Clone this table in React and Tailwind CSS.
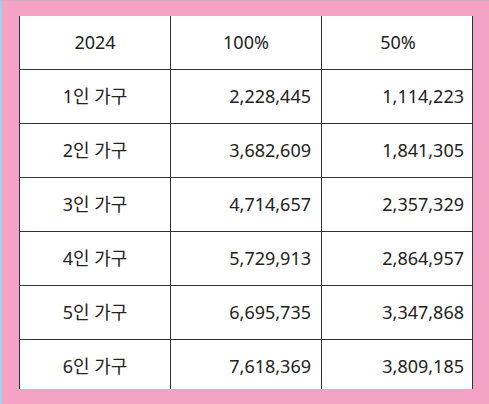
export default function App() {
  const rows = [
    ["1인 가구", "2,228,445", "1,114,223"],
    ["2인 가구", "3,682,609", "1,841,305"],
    ["3인 가구", "4,714,657", "2,357,329"],
    ["4인 가구", "5,729,913", "2,864,957"],
    ["5인 가구", "6,695,735", "3,347,868"],
    ["6인 가구", "7,618,369", "3,809,185"],
  ];
  const font = { fontFamily: '"Noto Sans", "Noto Sans CJK KR", sans-serif' };
  return (
    <div className="w-[489px] h-[404px] bg-[#f4a2c6] border-l-2 border-l-[#9fd3e6] border-t border-t-[#d6a8cc] pl-[17px] pt-[15px] pr-[16px] pb-[15px] overflow-hidden">
      <div className="h-[373px] overflow-hidden bg-white text-[18px] text-[#222]" style={font}>
        <div className="grid grid-cols-[151px_151px_152px] border-l-[1.5px] border-r-[1.5px] border-[#333]">
          <div className="h-[54px] flex items-center justify-center border-r-[1.5px] border-[#333] border-b-[1.5px]">2024</div>
          <div className="h-[54px] flex items-center justify-center border-r-[1.5px] border-[#333] border-b-[1.5px]">100%</div>
          <div className="h-[54px] flex items-center justify-center border-[#333] border-b-[1.5px]">50%</div>
          {rows.map((r) => (
            <>
              <div key={r[0] + "a"} className="h-[54px] flex items-center justify-center border-r-[1.5px] border-[#333] border-b-[1.5px]">{r[0]}</div>
              <div key={r[0] + "b"} className="h-[54px] flex items-center justify-end pr-[10px] border-r-[1.5px] border-[#333] border-b-[1.5px]">{r[1]}</div>
              <div key={r[0] + "c"} className="h-[54px] flex items-center justify-end pr-[10px] border-[#333] border-b-[1.5px]">{r[2]}</div>
            </>
          ))}
        </div>
      </div>
    </div>
  );
}
